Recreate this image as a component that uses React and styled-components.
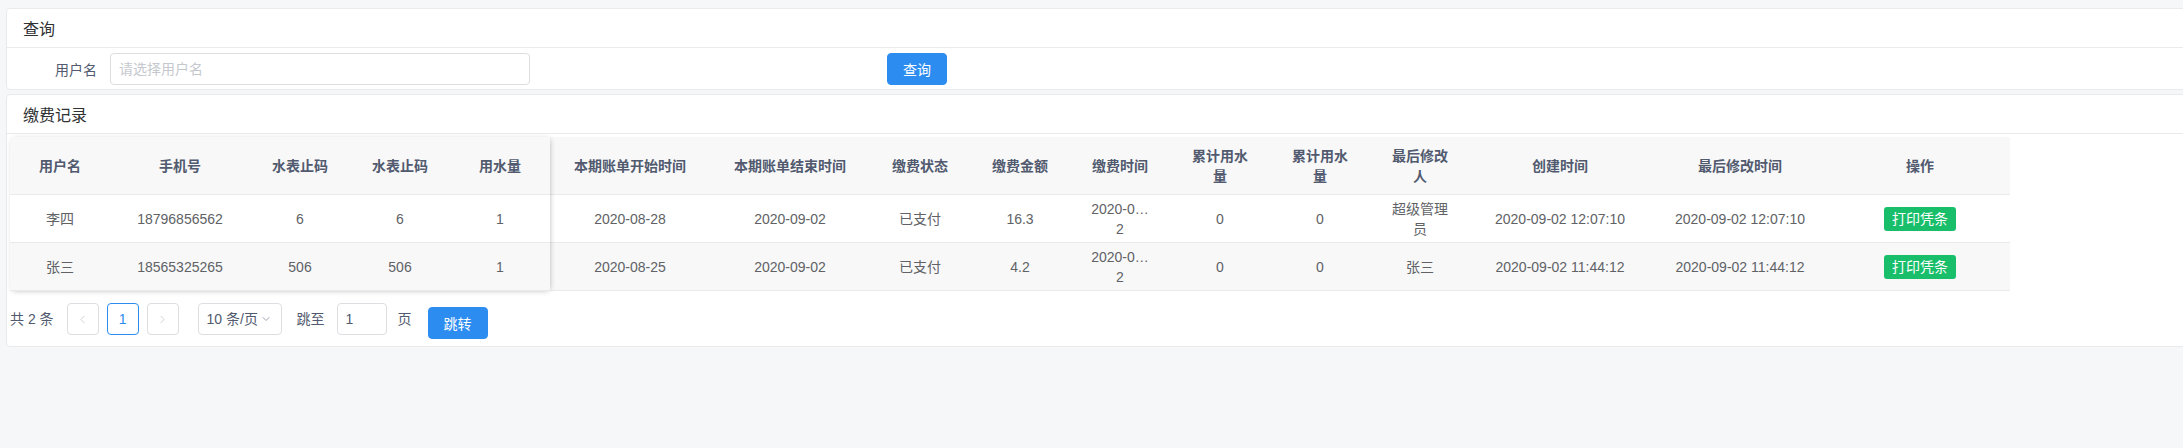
import React from "react";
import styled, { createGlobalStyle } from "styled-components";
import { ChevronLeft, ChevronRight, ChevronDown } from "lucide-react";

const GlobalStyle = createGlobalStyle`
  body {
    margin: 0;
    background: #f5f7f9;
    font-family: "Liberation Sans", "Noto Sans CJK SC", sans-serif;
    font-size: 14px;
    color: #515a6e;
    overflow: hidden;
  }
`;

const Page = styled.div`
  padding: 8px 0 0 6px;
  min-height: 448px;
  box-sizing: border-box;
  overflow: hidden;
`;

const Card = styled.div`
  background: #fff;
  border: 1px solid #e8eaec;
  border-radius: 4px;
  margin-right: -20px;

  & + & {
    margin-top: 4px;
  }
`;

const CardHead = styled.div`
  height: 38px;
  display: flex;
  align-items: center;
  padding-left: 16px;
  font-size: 16px;
  color: #303133;
  border-bottom: 1px solid #e8eaec;
`;

const SearchRow = styled.div`
  height: 41px;
  display: flex;
  align-items: center;
  padding-left: 10px;
`;

const Label = styled.label`
  width: 80px;
  text-align: right;
  margin-right: 13px;
  color: #515a6e;
`;

const TextInput = styled.input`
  width: ${({ $width }) => $width}px;
  height: 32px;
  box-sizing: border-box;
  border: 1px solid #dcdee2;
  border-radius: 4px;
  padding: 0 8px;
  font: inherit;
  color: #515a6e;
  outline: none;

  &::placeholder {
    color: #c5c8ce;
  }
`;

const PrimaryButton = styled.button`
  height: 32px;
  width: 60px;
  background: #2d8cf0;
  border: 1px solid #2d8cf0;
  border-radius: 4px;
  color: #fff;
  font: inherit;
  padding: 0;
  margin-left: ${({ $offset }) => $offset || 0}px;
  margin-top: ${({ $top }) => $top || 0}px;
`;

const CardBody = styled.div`
  padding: 3px 3px 7px;
`;

const TableWrap = styled.div`
  display: flex;
  width: 2000px;
`;

const Block = styled.div`
  display: grid;
  grid-template-columns: ${({ $cols }) => $cols};
  position: relative;
  z-index: ${({ $fixed }) => ($fixed ? 1 : 0)};
  box-shadow: ${({ $fixed }) =>
    $fixed
      ? "2px 0 6px -2px rgba(0,0,0,.2), 0 2px 6px -2px rgba(0,0,0,.15)"
      : "none"};
`;

const HeadCell = styled.div`
  height: 58px;
  box-sizing: border-box;
  display: flex;
  align-items: center;
  justify-content: center;
  text-align: center;
  padding: 0 18px;
  background: #f8f8f9;
  border-bottom: 1px solid #e8eaec;
  font-weight: 700;
  color: #515a6e;
  line-height: 20px;
`;

const BodyCell = styled.div`
  height: 48px;
  box-sizing: border-box;
  display: flex;
  align-items: center;
  justify-content: center;
  text-align: center;
  padding: 0 18px;
  background: ${({ $striped }) => ($striped ? "#f8f8f9" : "#fff")};
  border-bottom: 1px solid #e8eaec;
  color: #606266;
  line-height: 20px;
`;

const PrintTag = styled.button`
  height: 24px;
  padding: 0 8px;
  background: #19be6b;
  border: none;
  border-radius: 3px;
  color: #fff;
  font: inherit;
  line-height: 24px;
  white-space: nowrap;
`;

const Pager = styled.div`
  display: flex;
  align-items: flex-start;
  margin-top: 12px;
  line-height: 32px;
  color: #515a6e;
  white-space: nowrap;
`;

const Total = styled.span`
  margin-right: 13px;
`;

const PageItem = styled.div`
  width: 32px;
  height: 32px;
  box-sizing: border-box;
  border: 1px solid ${({ $active }) => ($active ? "#2d8cf0" : "#dcdee2")};
  border-radius: 4px;
  color: ${({ $active }) => ($active ? "#2d8cf0" : "#c5c8ce")};
  display: flex;
  align-items: center;
  justify-content: center;
  margin-right: 8px;
`;

const SizeSelect = styled.div`
  width: 84px;
  height: 32px;
  box-sizing: border-box;
  border: 1px solid #dcdee2;
  border-radius: 4px;
  display: flex;
  align-items: center;
  padding: 0 0 0 8px;
  gap: 2px;
  margin-left: 11px;
  color: #515a6e;
  white-space: nowrap;
  flex-shrink: 0;
`;

const Gap = styled.span`
  margin-left: ${({ $w }) => $w}px;
`;

const columns = [
  { key: "name", title: "用户名", width: 100, fixed: true },
  { key: "phone", title: "手机号", width: 140, fixed: true },
  { key: "startCode", title: "水表止码", width: 100, fixed: true },
  { key: "endCode", title: "水表止码", width: 100, fixed: true },
  { key: "usage", title: "用水量", width: 100, fixed: true },
  { key: "billStart", title: "本期账单开始时间", width: 160 },
  { key: "billEnd", title: "本期账单结束时间", width: 160 },
  { key: "status", title: "缴费状态", width: 100 },
  { key: "amount", title: "缴费金额", width: 100 },
  { key: "payTime", title: "缴费时间", width: 100 },
  { key: "total1", title: "累计用水量", width: 100 },
  { key: "total2", title: "累计用水量", width: 100 },
  { key: "editor", title: "最后修改人", width: 100 },
  { key: "created", title: "创建时间", width: 180 },
  { key: "updated", title: "最后修改时间", width: 180 },
  { key: "action", title: "操作", width: 180 },
];

const rows = [
  {
    name: "李四",
    phone: "18796856562",
    startCode: "6",
    endCode: "6",
    usage: "1",
    billStart: "2020-08-28",
    billEnd: "2020-09-02",
    status: "已支付",
    amount: "16.3",
    payTime: "2020-0…\n2",
    total1: "0",
    total2: "0",
    editor: "超级管理员",
    created: "2020-09-02 12:07:10",
    updated: "2020-09-02 12:07:10",
  },
  {
    name: "张三",
    phone: "18565325265",
    startCode: "506",
    endCode: "506",
    usage: "1",
    billStart: "2020-08-25",
    billEnd: "2020-09-02",
    status: "已支付",
    amount: "4.2",
    payTime: "2020-0…\n2",
    total1: "0",
    total2: "0",
    editor: "张三",
    created: "2020-09-02 11:44:12",
    updated: "2020-09-02 11:44:12",
  },
];

const renderCell = (col, row) => {
  if (col.key === "action") return <PrintTag>打印凭条</PrintTag>;
  const v = row[col.key];
  if (v.includes("\n"))
    return v.split("\n").map((line, i) => (
      <React.Fragment key={i}>
        {i > 0 && <br />}
        {line}
      </React.Fragment>
    ));
  return v;
};

const TablePart = ({ cols, fixed }) => (
  <Block $fixed={fixed} $cols={cols.map((c) => c.width + "px").join(" ")}>
    {cols.map((c) => (
      <HeadCell key={c.key}>{c.title}</HeadCell>
    ))}
    {rows.map((row, i) =>
      cols.map((c) => (
        <BodyCell key={c.key + i} $striped={i % 2 === 1}>
          {renderCell(c, row)}
        </BodyCell>
      ))
    )}
  </Block>
);

export default function App() {
  return (
    <Page>
      <GlobalStyle />
      <Card>
        <CardHead>查询</CardHead>
        <SearchRow>
          <Label>用户名</Label>
          <TextInput $width={420} placeholder="请选择用户名" />
          <PrimaryButton $offset={357}>查询</PrimaryButton>
        </SearchRow>
      </Card>
      <Card>
        <CardHead>缴费记录</CardHead>
        <CardBody>
          <TableWrap>
            <TablePart cols={columns.filter((c) => c.fixed)} fixed />
            <TablePart cols={columns.filter((c) => !c.fixed)} />
          </TableWrap>
          <Pager>
            <Total>共 2 条</Total>
            <PageItem>
              <ChevronLeft size={13} strokeWidth={1.5} />
            </PageItem>
            <PageItem $active>1</PageItem>
            <PageItem>
              <ChevronRight size={13} strokeWidth={1.5} />
            </PageItem>
            <SizeSelect>
              10 条/页
              <ChevronDown size={12} color="#808695" strokeWidth={1.5} />
            </SizeSelect>
            <Gap $w={15}>跳至</Gap>
            <Gap $w={12}>
              <TextInput $width={50} defaultValue="1" />
            </Gap>
            <Gap $w={11}>页</Gap>
            <PrimaryButton $offset={16} $top={4}>
              跳转
            </PrimaryButton>
          </Pager>
        </CardBody>
      </Card>
    </Page>
  );
}
